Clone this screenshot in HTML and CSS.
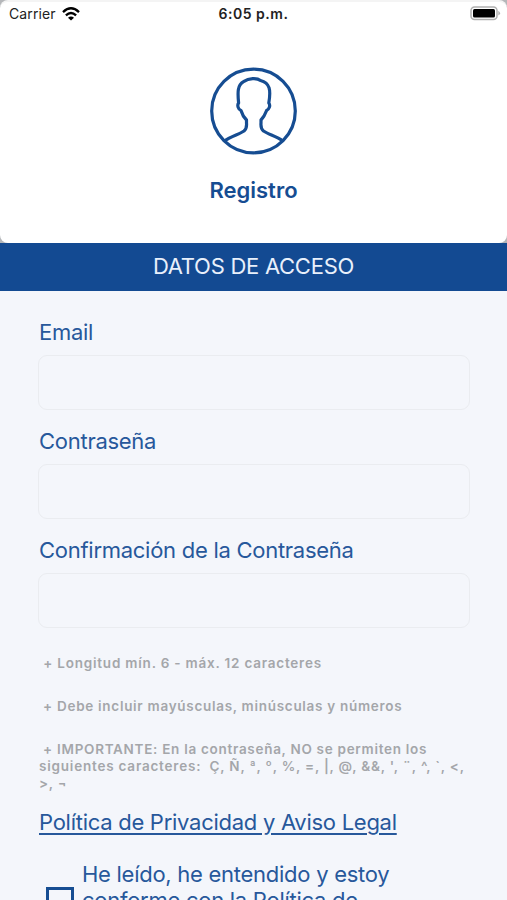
FILE: index.html
```html
<!doctype html>
<html lang="es">
<head>
    <meta charset="UTF-8">
    <title>Registro</title>
    <link rel="stylesheet" href="styles.css">
</head>
<body>
    <div id="top">
        <div id="header">
            <div class="status">
                <div class="carrier">
                    <span>Carrier</span>
                    <svg width="18" height="14" viewBox="0 0 18 14" fill="none" stroke="#000" stroke-width="2.3">
                        <path d="M1 5.1 Q9 -2.5 17 5.1"/>
                        <path d="M3.9 8.4 Q9 3.5 14.1 8.4"/>
                        <path d="M9 13.6 L6 10.7 Q9 8.3 12 10.7 Z" fill="#000" stroke="none"/>
                    </svg>
                </div>
                <div class="time">6:05 p.m.</div>
                <div class="battery">
                    <svg width="31" height="15" viewBox="0 0 31 15">
                        <rect x="1" y="1" width="26" height="12.5" rx="3.5" fill="#fff" stroke="#b0b0b0" stroke-width="1.5"/>
                        <rect x="3" y="3" width="22" height="8.6" rx="1.5" fill="#000"/>
                        <path d="M28.3 4.8 Q31.8 7.2 28.3 9.6 Z" fill="#b0b0b0"/>
                    </svg>
                </div>
            </div>
            <svg class="avatar" width="88" height="88" viewBox="0 0 88 88" fill="none" stroke="#164d92" stroke-width="3.2" stroke-linejoin="round">
                <circle cx="43.5" cy="44" r="41.8"/>
                <path d="M14.5 74 C21 69 29 67.5 34 64 Q37 61.5 36.5 56 L36.5 53 C33.5 50 32 47 31 43.5 C28 42.5 27 38 28.6 36 C27.5 25 27.5 18 33.5 14.6 C39 11 47 10.8 50.5 13.5 C60 16 61 23 58.8 36 C60.8 38.5 59 42.5 56.6 43.5 C55.3 47 54 50 51 53 L51 56 Q50.5 61.5 53.5 64 C58.5 67.5 66.5 69 73 74"/>
            </svg>
            <h1>Registro</h1>
        </div>
    </div>
    <h2>DATOS DE ACCESO</h2>
    <form id="registro">
        <label for="email">Email</label>
        <input type="text" id="email">
        <label for="pass">Contraseña</label>
        <input type="password" id="pass">
        <label for="confirm">Confirmación de la Contraseña</label>
        <input type="password" id="confirm">
        <ul class="notas">
            <li class="ancha"> + Longitud mín. 6 - máx. 12 caracteres</li>
            <li> + Debe incluir mayúsculas, minúsculas y números</li>
            <li> + IMPORTANTE: En la contraseña, NO se permiten los<br><span class="ancha">siguientes caracteres:  Ç, Ñ, ª, º, %, =, |, @, &amp;&amp;, ', ¨, ^, `, &lt;,</span><br>&gt;, ¬</li>
        </ul>
        <a class="politica" href="#">Política de Privacidad y Aviso Legal</a>
        <div class="acepto">
            <span class="check"></span>
            <p>He leído, he entendido y estoy<br>conforme con la Política de</p>
        </div>
    </form>
</body>
</html>
```
FILE: styles.css
```css
*{
    margin: 0;
    padding: 0;
    box-sizing: border-box;
}
body{
    height: 900px;
    overflow: hidden;
    background: #f4f6fb;
    color: #27589b;
    font-family: Inter, "Liberation Sans", sans-serif;
}
ul{
    list-style: none;
}
#top{
    background: #b5b7ba;
}
#header{
    height: 243px;
    background: #fff;
    border-top: 2px solid #f4f4f4;
    border-radius: 8px;
    display: flex;
    flex-direction: column;
    align-items: center;
}
.status{
    width: 100%;
    height: 23px;
    padding: 0 6px 0 9px;
    display: grid;
    grid-template-columns: 1fr auto 1fr;
    align-items: center;
    color: #222;
    font-size: 14px;
}
.carrier{
    display: flex;
    align-items: center;
    gap: 6px;
    letter-spacing: 0.1px;
}
.time{
    margin-right: 3px;
    font-weight: 600;
    letter-spacing: 0.5px;
}
.battery{
    display: flex;
    justify-content: flex-end;
}
.avatar{
    margin-top: 42px;
}
h1{
    margin-top: 22px;
    color: #164d92;
    font-size: 22px;
    line-height: 26px;
    font-weight: 600;
}
h2{
    height: 48px;
    background: #134a92;
    color: #e9f0fb;
    font-size: 22px;
    line-height: 47px;
    font-weight: 400;
    letter-spacing: -0.27px;
    text-align: center;
}
#registro{
    padding: 28px 38px 0;
}
label{
    display: block;
    width: max-content;
    padding-left: 1px;
    font-size: 22px;
    line-height: 26px;
    letter-spacing: -0.27px;
}
input{
    display: block;
    width: 432px;
    height: 55px;
    margin: 10px 0 18px;
    border: 1px solid #eaecf0;
    border-radius: 9px;
    background: #f4f6fb;
}
/*requisitos de la contraseña*/
.notas{
    padding: 9px 0 0 1px;
    color: #a4a6aa;
    font-size: 13.5px;
    line-height: 17px;
    font-weight: 600;
    letter-spacing: 0.71px;
}
.notas li{
    width: max-content;
    margin-bottom: 26px;
    white-space: pre;
}
.notas li:last-child{
    margin-bottom: 17px;
}
.notas .ancha{
    letter-spacing: 0.79px;
}
.politica{
    display: block;
    width: max-content;
    margin-left: 1px;
    color: #27589b;
    font-size: 22px;
    line-height: 26px;
    letter-spacing: -0.27px;
    text-underline-offset: 3px;
}
.acepto{
    display: flex;
    margin-top: 26px;
    padding-left: 8px;
}
.check{
    width: 28px;
    height: 28px;
    margin: 26px 8px 0 0;
    border: 3px solid #164d92;
}
.acepto p{
    font-size: 22px;
    line-height: 26px;
    letter-spacing: -0.27px;
    white-space: nowrap;
}
```
